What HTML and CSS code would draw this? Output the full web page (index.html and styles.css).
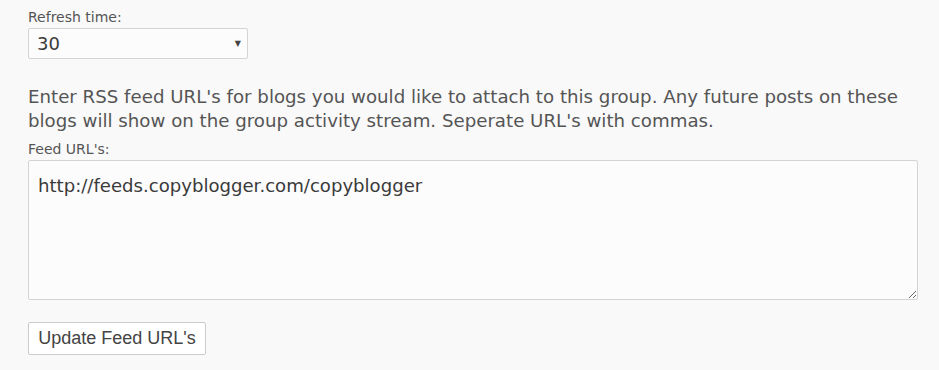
FILE: index.html
```html
<!DOCTYPE html>
<html>
<head>
<meta charset="utf-8">
<link rel="stylesheet" href="styles.css">
</head>
<body>
<div class="page">
  <label class="lbl">Refresh time:</label>
  <div class="select">
    <span>30</span>
    <span class="arrow">▼</span>
  </div>
  <p class="intro">Enter RSS feed URL's for blogs you would like to attach to this group. Any future posts on these blogs will show on the group activity stream. Seperate URL's with commas.</p>
  <label class="lbl lbl2">Feed URL's:</label>
  <textarea class="ta">http://feeds.copyblogger.com/copyblogger</textarea>
  <button class="btn">Update Feed URL's</button>
</div>
</body>
</html>
```
FILE: styles.css
```css
html, body { margin: 0; padding: 0; background: #f9f9f9; }
body { font-family: "DejaVu Sans", sans-serif; color: #555; }
.page { padding: 8px 21px 0 28px; display: flex; flex-direction: column; align-items: flex-start; }
.lbl { font-size: 14px; line-height: 18px; display: block; }
.select {
  margin-top: 2px;
  width: 220px; height: 31px; box-sizing: border-box;
  border: 1px solid #d4d4d4; border-radius: 2px; background: #fcfcfc;
  display: flex; align-items: center; justify-content: space-between;
  padding: 0 6px 0 8px; font-size: 18px; color: #3a3a3a;
}
.arrow { font-size: 8px; color: #444; }
.intro { margin: 26px 0 0 0; font-size: 18.2px; line-height: 24px; width: 890px; }
.lbl2 { margin-top: 7px; }
.ta {
  margin-top: 2px;
  width: 890px; height: 140px; box-sizing: border-box;
  border: 1px solid #d4d4d4; border-radius: 2px; background: #fcfcfc;
  font-family: "DejaVu Sans", sans-serif; font-size: 18.1px; color: #3a3a3a;
  padding: 13px 9px; line-height: 24px; resize: both;
}
.btn {
  margin-top: 22px;
  height: 33px; width: 178px; box-sizing: border-box;
  border: 1px solid #ccc; border-radius: 2px; background: #fff;
  font-family: "Liberation Sans", Arial, sans-serif; font-size: 18px; color: #444;
  padding: 0 8px;
}
```
